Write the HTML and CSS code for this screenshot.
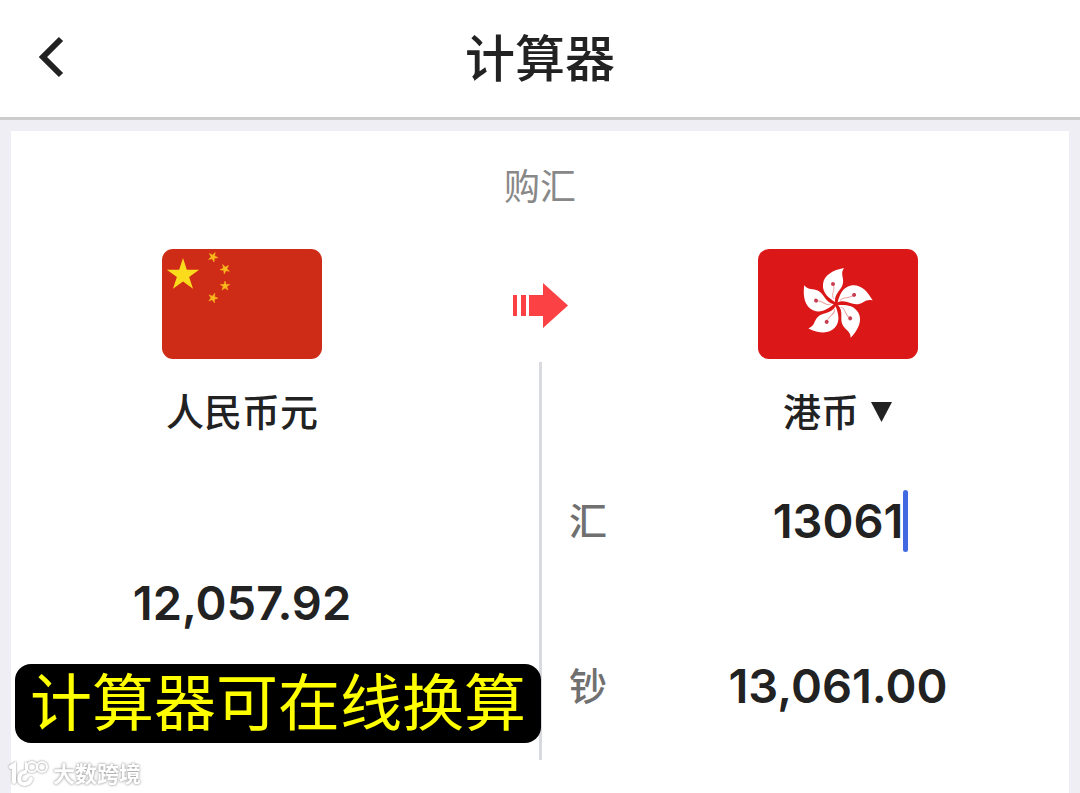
FILE: index.html
```html
<!DOCTYPE html>
<html lang="zh-CN">
<head>
    <meta charset="UTF-8">
    <meta name="viewport" content="width=device-width, initial-scale=1.0">
    <title>计算器</title>
    <link rel="stylesheet" href="styles.css">
</head>
<body>
    <header class="topbar">
        <button type="button" class="back" aria-label="返回">
            <svg width="28" height="46" viewBox="0 0 28 46">
                <path d="M25 3 L7 21 L25 39" fill="none" stroke="#222" stroke-width="6"/>
            </svg>
        </button>
        <h1>计算器</h1>
    </header>

    <main class="card">
        <h2>购汇</h2>
        <div class="exchange">
            <svg class="flag flag-from" viewBox="0 0 160 110">
                <defs>
                    <path id="star" d="M0 -10 L2.25 -3.1 L9.5 -3.1 L3.6 1.2 L5.9 8.1 L0 3.8 L-5.9 8.1 L-3.6 1.2 L-9.5 -3.1 L-2.25 -3.1 Z"/>
                </defs>
                <rect width="160" height="110" fill="#cf2c18"/>
                <g fill="#fbdc1c">
                    <use href="#star" transform="translate(21 26) scale(1.7)"/>
                </g>
                <g fill="#f9b81c" stroke="#f9b81c" stroke-width="1">
                    <use href="#star" transform="translate(51 8) rotate(25) scale(0.5)"/>
                    <use href="#star" transform="translate(63 20) rotate(45) scale(0.5)"/>
                    <use href="#star" transform="translate(63 37) scale(0.5)"/>
                    <use href="#star" transform="translate(51 49) rotate(20) scale(0.5)"/>
                </g>
            </svg>

            <svg class="arrow" width="56" height="46" viewBox="0 0 56 46" fill="#fc4144">
                <path d="M1 12h4v21h-4z M9 12h5v21h-5z M17 12h14v-12l25 22.500l-25 22.500v-12h-14z"/>
            </svg>

            <svg class="flag flag-to" viewBox="0 0 160 110">
                <defs>
                    <g id="petal">
                        <path d="M-1 -2 C-7 -6 -14 -11 -13 -20 C-12 -29 -3 -34 8 -36 C4 -30 8 -27 7 -21 C6 -14 -2 -11 -1 -2 Z" fill="#fff"/>
                        <path d="M-2 -5 C-6 -10 0 -13 -3 -20" fill="none" stroke="#f0a0a4" stroke-width="1"/>
                        <circle cx="-3" cy="-20" r="2" fill="#c83c50"/>
                    </g>
                </defs>
                <rect width="160" height="110" fill="#db1717"/>
                <g transform="translate(78 55)">
                    <use href="#petal"/>
                    <use href="#petal" transform="rotate(72)"/>
                    <use href="#petal" transform="rotate(144)"/>
                    <use href="#petal" transform="rotate(216)"/>
                    <use href="#petal" transform="rotate(288)"/>
                </g>
            </svg>

            <div class="divider"></div>

            <div class="name name-from">人民币元</div>
            <div class="name name-to">
                <select aria-label="币种">
                    <option>港币</option>
                </select>
                <svg width="22" height="20" viewBox="0 0 22 20"><path d="M0 0h21l-10.500 20z" fill="#222"/></svg>
            </div>

            <output class="amount amount-from">12,057.92</output>

            <label class="kind kind-remit" for="remit">汇</label>
            <div class="amount amount-remit">
                <input type="text" id="remit" inputmode="decimal" value="13061">
                <span class="caret"></span>
            </div>

            <label class="kind kind-cash" for="cash">钞</label>
            <output class="amount amount-cash" id="cash">13,061.00</output>

            <p class="caption">计算器可在线换算</p>
        </div>
    </main>

    <div class="watermark">
        <svg width="40" height="28" viewBox="0 0 40 28" fill="none" stroke="#fff" stroke-linecap="round">
            <path d="M2 7 L5 5 V22" stroke-width="4"/>
            <path d="M16 12 C9 12 8 24 15 24 C19 24 21 22 22 19" stroke-width="4"/>
            <path d="M17 3 V11" stroke-width="2"/>
            <circle cx="23" cy="7" r="5" stroke-width="2"/>
            <circle cx="33" cy="7" r="5" stroke-width="2"/>
        </svg>
        <span>大数跨境</span>
    </div>
</body>
</html>
```

FILE: styles.css
```css
* {
    box-sizing: border-box;
}
body {
    margin: 0;
    min-height: 100vh;
    display: flex;
    flex-direction: column;
    background: #eeeef4;
    color: #222;
    font-family: Inter, "Noto Sans CJK SC", sans-serif;
}
h1, h2, p {
    margin: 0;
}
.topbar {
    display: grid;
    grid-template-columns: 100px 1fr 100px;
    align-items: center;
    height: 120px;
    background: #fff;
    border-bottom: 3px solid #ccc;
}
.topbar h1 {
    font-size: 50px;
    line-height: 60px;
    font-weight: 500;
    text-align: center;
}
.back {
    display: flex;
    justify-content: center;
    padding: 0;
    border: none;
    background: none;
    cursor: pointer;
}
.card {
    flex: 1;
    margin: 11px 11px 0;
    padding-top: 29px;
    background: #fff;
}
.card h2 {
    margin-bottom: 35px;
    font-size: 36px;
    line-height: 54px;
    font-weight: 400;
    color: #888;
    text-align: center;
}
.exchange {
    position: relative;
    display: grid;
    grid-template-columns: 1fr 65px 4px 65px 1fr;
    grid-template-rows: 113px 76px 165px 165px;
    justify-items: center;
    align-items: center;
}
.flag {
    width: 160px;
    height: 110px;
    border-radius: 11px;
    align-self: start;
}
.flag-from {
    grid-area: 1 / 1;
}
.flag-to {
    grid-area: 1 / 5;
}
.arrow {
    grid-area: 1 / 2 / 2 / 5;
}
.divider {
    grid-area: 2 / 3 / 5 / 4;
    align-self: stretch;
    justify-self: end;
    width: 3px;
    margin-bottom: 8px;
    background: #d9d9e0;
}
.name {
    display: flex;
    align-items: center;
    gap: 11px;
    align-self: end;
    font-size: 38px;
    line-height: 52px;
    font-weight: 500;
}
.name-from {
    grid-area: 2 / 1;
}
.name-to {
    grid-area: 2 / 5;
}
.name select {
    appearance: none;
    padding: 0;
    border: none;
    background: none;
    color: inherit;
    font: inherit;
}
.amount {
    font-family: Inter, sans-serif;
    font-size: 47px;
    line-height: 62px;
    font-weight: 600;
}
.amount-from {
    grid-area: 3 / 1 / 5 / 2;
}
.amount-remit {
    grid-area: 3 / 5;
    position: relative;
}
.amount-cash {
    grid-area: 4 / 5;
}
.amount input {
    display: block;
    width: 140px;
    height: 62px;
    padding: 0;
    border: none;
    outline: none;
    background: none;
    color: inherit;
    font: inherit;
    text-align: center;
}
.caret {
    position: absolute;
    top: 0;
    right: 0;
    width: 5px;
    height: 62px;
    border-radius: 3px;
    background: #4169e1;
}
.kind {
    justify-self: end;
    font-size: 38px;
    line-height: 52px;
    font-weight: 500;
    color: #707070;
}
.kind-remit {
    grid-area: 3 / 4;
}
.kind-cash {
    grid-area: 4 / 4;
}
.caption {
    position: absolute;
    left: 4px;
    bottom: 25px;
    padding: 0 15px;
    border-radius: 16px;
    background: #000;
    color: #ff0;
    font-size: 62px;
    line-height: 79px;
    white-space: nowrap;
}
.watermark {
    position: fixed;
    left: 9px;
    bottom: 4px;
    display: flex;
    align-items: center;
    gap: 4px;
    color: #fff;
    font-size: 22px;
    line-height: 30px;
    font-weight: 700;
    text-shadow: 0 0 3px #999, 0 0 2px #bbb;
}
.watermark svg {
    filter: drop-shadow(0 0 1px #888);
}
```
